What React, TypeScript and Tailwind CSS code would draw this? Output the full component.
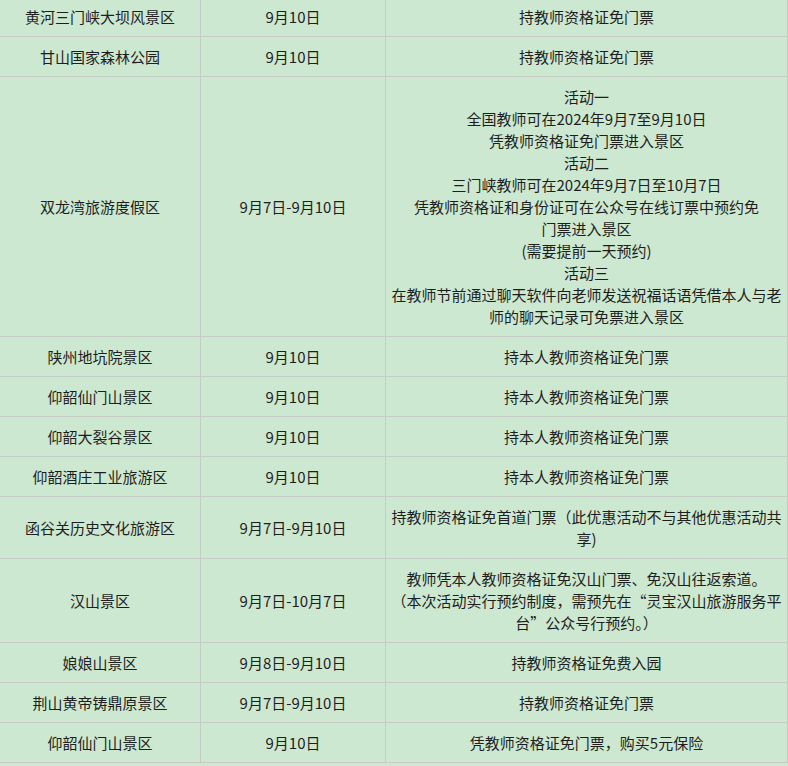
type Row = {
  name: string;
  date: string;
  lines: string[];
};

const rows: Row[] = [
  { name: "黄河三门峡大坝风景区", date: "9月10日", lines: ["持教师资格证免门票"] },
  { name: "甘山国家森林公园", date: "9月10日", lines: ["持教师资格证免门票"] },
  {
    name: "双龙湾旅游度假区",
    date: "9月7日-9月10日",
    lines: [
      "活动一",
      "全国教师可在2024年9月7至9月10日",
      "凭教师资格证免门票进入景区",
      "活动二",
      "三门峡教师可在2024年9月7日至10月7日",
      "凭教师资格证和身份证可在公众号在线订票中预约免",
      "门票进入景区",
      "(需要提前一天预约)",
      "活动三",
      "在教师节前通过聊天软件向老师发送祝福话语凭借本人与老",
      "师的聊天记录可免票进入景区",
    ],
  },
  { name: "陕州地坑院景区", date: "9月10日", lines: ["持本人教师资格证免门票"] },
  { name: "仰韶仙门山景区", date: "9月10日", lines: ["持本人教师资格证免门票"] },
  { name: "仰韶大裂谷景区", date: "9月10日", lines: ["持本人教师资格证免门票"] },
  { name: "仰韶酒庄工业旅游区", date: "9月10日", lines: ["持本人教师资格证免门票"] },
  {
    name: "函谷关历史文化旅游区",
    date: "9月7日-9月10日",
    lines: ["持教师资格证免首道门票（此优惠活动不与其他优惠活动共", "享)"],
  },
  {
    name: "汉山景区",
    date: "9月7日-10月7日",
    lines: [
      "教师凭本人教师资格证免汉山门票、免汉山往返索道。",
      "（本次活动实行预约制度，需预先在“灵宝汉山旅游服务平",
      "台”公众号行预约。）",
    ],
  },
  { name: "娘娘山景区", date: "9月8日-9月10日", lines: ["持教师资格证免费入园"] },
  { name: "荆山黄帝铸鼎原景区", date: "9月7日-9月10日", lines: ["持教师资格证免门票"] },
  { name: "仰韶仙门山景区", date: "9月10日", lines: ["凭教师资格证免门票，购买5元保险"] },
];

// shared cell look
const cell =
  "flex items-center justify-center text-center border-r border-b border-[#c6cbc6] pt-[9px] pb-[8px] px-[4px]";

export default function App() {
  return (
    <div
      className="w-[788px] h-[766px] overflow-hidden bg-[#cde8d0] text-[#1e1e1e] text-[15px] leading-[22px]"
      style={{ fontFamily: '"Noto Sans CJK SC", "Noto Sans", sans-serif' }}
    >
      <div className="-mt-[3px] grid grid-cols-[201px_185px_402px]">
        {rows.map((row, i) => (
          <div key={i} className="contents">
            <div className={cell}>{row.name}</div>
            <div className={cell}>{row.date}</div>
            <div className={cell + " flex-col"}>
              {row.lines.map((line, j) => (
                <span key={j} className="block whitespace-nowrap">
                  {line}
                </span>
              ))}
            </div>
          </div>
        ))}
      </div>
    </div>
  );
}
